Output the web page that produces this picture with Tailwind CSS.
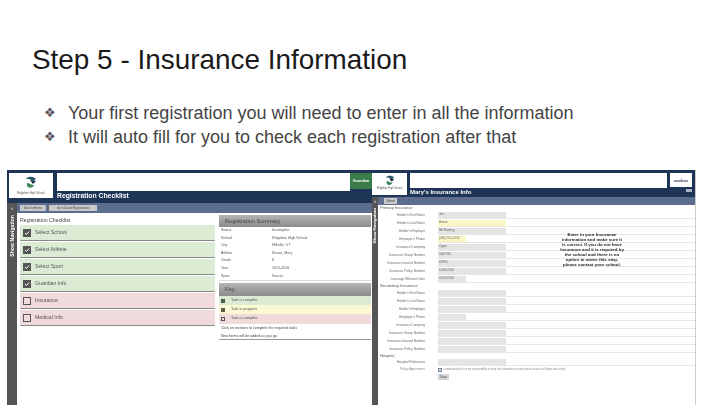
<!DOCTYPE html>
<html lang="en">
<head>
<meta charset="UTF-8">
<title>Step 5 - Insurance Information</title>
<script src="https://cdn.jsdelivr.net/npm/@tailwindcss/browser@4"></script>
</head>
<body class="bg-white overflow-hidden font-['Liberation_Sans',Arial,sans-serif]">
<div class="w-[720px] h-[405px] overflow-hidden">
  <h1 class="pt-[43px] pl-[32px] text-[27.9px] leading-[34px] text-[#1a1a1a]">Step 5 - Insurance Information</h1>
  <ul class="mt-[24px] pl-[44px] text-[18px] leading-[24px] text-[#444]">
    <li class="flex"><span class="w-[24px] text-[13px] text-[#555] font-['DejaVu_Sans',sans-serif]">❖</span>Your first registration you will need to enter in all the information</li>
    <li class="flex"><span class="w-[24px] text-[13px] text-[#555] font-['DejaVu_Sans',sans-serif]">❖</span>It will auto fill for you to check each registration after that</li>
  </ul>

  <div class="mt-[21px] ml-[7px] flex h-[235px] blur-[0.45px]">
    <!-- left screenshot: checklist -->
    <section class="w-[365px] flex flex-col">
      <div class="h-[33px] bg-[#1f3557] pt-[3px] pl-[2px] flex items-start">
        <div class="w-[44px] h-[25px] bg-white flex flex-col items-center pt-[3px]">
          <svg width="14" height="13" viewBox="0 0 14 13"><path d="M2 3C4 0 9 0 12 3L9 5 5 3Z" fill="#27566b"/><path d="M6 4l6 1-3 3z" fill="#1b2f3a"/><path d="M3 7c2 0 4 2 7 2-1 3-5 4-7 1z" fill="#3f8a5a"/></svg>
          <span class="text-[2.8px] leading-[4px] mt-[2px] text-[#555]">Ridgeline High School</span>
        </div>
        <div class="ml-[4px] flex-1 flex flex-col">
          <div class="flex">
            <div class="flex-1 h-[18px] bg-white"></div>
            <div class="w-[22px] h-[16px] bg-[#3a7d4a] rounded-bl-[1px] text-white text-[3.8px] font-bold leading-[16px] text-center">Guardian</div>
          </div>
          <div class="text-white text-[6.8px] font-bold leading-[12px] mt-[-1px]">Registration Checklist</div>
        </div>
      </div>
      <div class="flex-1 flex">
        <div class="w-[10px] bg-[#555] flex flex-col items-center text-white font-bold">
          <span class="text-[5px] leading-[10px]">›</span>
          <span class="mt-[2px] text-[5.2px] leading-[10px] [writing-mode:vertical-rl] rotate-180">Show Navigation</span>
        </div>
        <div class="flex-1 flex flex-col">
          <div class="h-[10px] bg-[#5c6d8e] flex items-center pl-[3px] gap-[3px] text-[2.8px] text-[#444]">
            <span class="h-[6px] w-[26px] bg-[#c9c9c9] leading-[6px] text-center">Back to Home</span>
            <span class="h-[6px] w-[48px] bg-[#c9c9c9] leading-[6px] text-center">Go to Saved Registrations</span>
          </div>
          <div class="flex">
            <div class="w-[195px] ml-[3px] mr-[4px] text-[5.2px] text-[#555]">
              <div class="h-[12px] leading-[14px] text-[#444]">Registration Checklist</div>
              <div class="h-[16px] mb-[1px] bg-[#dcecd4] border-b border-[#888] rounded-[1px] flex items-center pl-[3px] gap-[4px]"><span class="w-[8px] h-[8px] bg-[#555] flex items-center justify-center"><svg width="6" height="6" viewBox="0 0 6 6"><path d="M1 3l1.5 1.5L5 1.5" fill="none" stroke="#fff"/></svg></span>Select School</div>
              <div class="h-[16px] mb-[1px] bg-[#dcecd4] border-b border-[#888] rounded-[1px] flex items-center pl-[3px] gap-[4px]"><span class="w-[8px] h-[8px] bg-[#555] flex items-center justify-center"><svg width="6" height="6" viewBox="0 0 6 6"><path d="M1 3l1.5 1.5L5 1.5" fill="none" stroke="#fff"/></svg></span>Select Athlete</div>
              <div class="h-[16px] mb-[1px] bg-[#dcecd4] border-b border-[#888] rounded-[1px] flex items-center pl-[3px] gap-[4px]"><span class="w-[8px] h-[8px] bg-[#555] flex items-center justify-center"><svg width="6" height="6" viewBox="0 0 6 6"><path d="M1 3l1.5 1.5L5 1.5" fill="none" stroke="#fff"/></svg></span>Select Sport</div>
              <div class="h-[16px] mb-[1px] bg-[#dcecd4] border-b border-[#888] rounded-[1px] flex items-center pl-[3px] gap-[4px]"><span class="w-[8px] h-[8px] bg-[#555] flex items-center justify-center"><svg width="6" height="6" viewBox="0 0 6 6"><path d="M1 3l1.5 1.5L5 1.5" fill="none" stroke="#fff"/></svg></span>Guardian Info</div>
              <div class="h-[16px] mb-[1px] bg-[#f0dadb] border-b border-[#888] rounded-[1px] flex items-center pl-[3px] gap-[4px]"><span class="w-[8px] h-[8px] border border-[#555]"></span>Insurance</div>
              <div class="h-[16px] mb-[1px] bg-[#f0dadb] border-b border-[#888] rounded-[1px] flex items-center pl-[3px] gap-[4px]"><span class="w-[8px] h-[8px] border border-[#555]"></span>Medical Info</div>
            </div>
            <div class="w-[152px] pt-[2px] text-[3.6px] text-[#555]">
              <div class="h-[12px] bg-linear-to-b from-[#b4b4b4] to-[#8c8c8c] text-[5.6px] leading-[12px] pl-[6px] text-[#444]">Registration Summary</div>
              <div class="grid grid-cols-[51px_1fr] pl-[2px] auto-rows-[7.6px] leading-[7.6px] border-b border-[#ddd]">
                <span>Status</span><span>Incomplete</span>
                <span>School</span><span>Ridgeline High School</span>
                <span>City</span><span>Millville, UT</span>
                <span>Athlete</span><span>Keese, Mary</span>
                <span>Grade</span><span>8</span>
                <span>Year</span><span>2015-2016</span>
                <span>Sport</span><span>Soccer</span>
              </div>
              <div class="mt-[2px] h-[13px] bg-linear-to-b from-[#b4b4b4] to-[#8c8c8c] text-[5.6px] leading-[13px] pl-[6px] text-[#444]">Key</div>
              <div class="h-[9px] bg-[#dcecd4] flex items-center pl-[2px] gap-[6px]"><span class="w-[4px] h-[4px] bg-[#4d5d48]"></span>Task is complete</div>
              <div class="h-[9px] bg-[#fbf8d2] flex items-center pl-[2px] gap-[6px]"><span class="w-[4px] h-[4px] bg-[#5a5a48]"></span>Task in progress</div>
              <div class="h-[10px] bg-[#f0dadb] flex items-center pl-[2px] gap-[6px]"><span class="w-[4px] h-[4px] border-[0.5px] border-[#555]"></span>Task is complete</div>
              <div class="pl-[2px] h-[16px] leading-[8px] border-b border-[#999] text-[#444]">
                <p>Click on sections to complete the required tasks</p>
                <p>New forms will be added as you go</p>
              </div>
            </div>
          </div>
        </div>
      </div>
    </section>

    <!-- right screenshot: insurance form -->
    <section class="relative w-[324px] flex flex-col border-r border-[#ccc]">
      <div class="h-[27px] bg-[#1f3557] pt-[3px] flex items-start">
        <div class="w-[35px] h-[22px] bg-white flex flex-col items-center pt-[2px]">
          <svg width="12" height="11" viewBox="0 0 14 13"><path d="M2 3C4 0 9 0 12 3L9 5 5 3Z" fill="#27566b"/><path d="M6 4l6 1-3 3z" fill="#1b2f3a"/><path d="M3 7c2 0 4 2 7 2-1 3-5 4-7 1z" fill="#3f8a5a"/></svg>
          <span class="text-[2.6px] leading-[4px] mt-[1px] text-[#555]">Ridgeline High School</span>
        </div>
        <div class="ml-[3px] flex-1 flex flex-col">
          <div class="h-[15px] bg-white"></div>
          <div class="text-white text-[6px] font-bold leading-[9px]">Mary's Insurance Info</div>
        </div>
        <div class="ml-[3px] mr-[3px] flex flex-col items-end">
          <div class="w-[22px] h-[14px] bg-white flex flex-col items-center justify-center">
            <span class="w-[1px] h-[2px] bg-[#aab]"></span>
            <span class="w-[14px] h-[1.5px] bg-[#99a]"></span>
          </div>
          <span class="mt-[2px] w-[6px] h-[3px] bg-[#a9b2c2]"></span>
        </div>
      </div>
      <div class="flex-1 flex">
        <div class="w-[6px] bg-[#555] flex flex-col items-center text-white font-bold">
          <span class="text-[5px] leading-[9px]">›</span>
          <span class="mt-[2px] text-[4.4px] leading-[6px] [writing-mode:vertical-rl] rotate-180">Show Navigation</span>
        </div>
        <div class="flex-1 flex flex-col text-[3.2px] text-[#666]">
          <div class="h-[8px] bg-[#5c6d8e] flex items-center pl-[6px] text-[2.8px] text-[#444]">
            <span class="h-[6px] w-[13px] bg-[#c9c9c9] leading-[6px] text-center">Submit</span>
          </div>
          <div class="h-[6px] pl-[2px] text-[4px] leading-[6px] text-[#555]">Primary Insurance</div>

          <div class="grid grid-cols-[47px_1fr] gap-x-[13px] auto-rows-[8px]">
            <label class="text-right leading-[8px]">Holder's First Name</label>
            <div class="border-b border-[#e6e6e6] pt-[1px]"><div class="w-[68px] h-[5.5px] bg-[#e4e4e4] text-[3px] leading-[5.5px] pl-[1px]">Jon</div></div>
            <label class="text-right leading-[8px]">Holder's Last Name</label>
            <div class="border-b border-[#e6e6e6] pt-[1px]"><div class="w-[68px] h-[5.5px] bg-[#fbf8c8] text-[3px] leading-[5.5px] pl-[1px]">Reese</div></div>
            <label class="text-right leading-[8px]">Holder's Employer</label>
            <div class="border-b border-[#e6e6e6] pt-[1px]"><div class="w-[68px] h-[5.5px] bg-[#e4e4e4] text-[3px] leading-[5.5px] pl-[1px]">NE Roofing</div></div>
            <label class="text-right leading-[8px]">Employer's Phone</label>
            <div class="border-b border-[#e6e6e6] pt-[1px]"><div class="w-[28px] h-[5.5px] bg-[#fbf8c8] text-[3px] leading-[5.5px] pl-[1px]">(435) 555-5555</div></div>
            <label class="text-right leading-[8px]">Insurance Company</label>
            <div class="border-b border-[#e6e6e6] pt-[1px]"><div class="w-[68px] h-[5.5px] bg-[#e4e4e4] text-[3px] leading-[5.5px] pl-[1px]">Cigna</div></div>
            <label class="text-right leading-[8px]">Insurance Group Number</label>
            <div class="border-b border-[#e6e6e6] pt-[1px]"><div class="w-[68px] h-[5.5px] bg-[#e4e4e4] text-[3px] leading-[5.5px] pl-[1px]">5647535</div></div>
            <label class="text-right leading-[8px]">Insurance Insured Number</label>
            <div class="border-b border-[#e6e6e6] pt-[1px]"><div class="w-[68px] h-[5.5px] bg-[#e4e4e4] text-[3px] leading-[5.5px] pl-[1px]">67890</div></div>
            <label class="text-right leading-[8px]">Insurance Policy Number</label>
            <div class="border-b border-[#e6e6e6] pt-[1px]"><div class="w-[68px] h-[5.5px] bg-[#e4e4e4] text-[3px] leading-[5.5px] pl-[1px]">10/01/2016</div></div>
            <label class="text-right leading-[8px]">Coverage Effective Date</label>
            <div class="border-b border-[#e6e6e6] pt-[1px]"><div class="w-[28px] h-[5.5px] bg-[#e4e4e4] text-[3px] leading-[5.5px] pl-[1px]">01/01/2016</div></div>
          </div>

          <div class="h-[6px] pl-[2px] text-[4px] leading-[6px] text-[#555]">Secondary Insurance</div>

          <div class="grid grid-cols-[47px_1fr] gap-x-[13px] auto-rows-[8px]">
            <label class="text-right leading-[8px]">Holder's First Name</label>
            <div class="border-b border-[#e6e6e6] pt-[1px]"><div class="w-[68px] h-[5.5px] bg-[#e4e4e4]"></div></div>
            <label class="text-right leading-[8px]">Holder's Last Name</label>
            <div class="border-b border-[#e6e6e6] pt-[1px]"><div class="w-[68px] h-[5.5px] bg-[#e4e4e4]"></div></div>
            <label class="text-right leading-[8px]">Holder's Employer</label>
            <div class="border-b border-[#e6e6e6] pt-[1px]"><div class="w-[68px] h-[5.5px] bg-[#e4e4e4]"></div></div>
            <label class="text-right leading-[8px]">Employer's Phone</label>
            <div class="border-b border-[#e6e6e6] pt-[1px]"><div class="w-[28px] h-[5.5px] bg-[#e4e4e4]"></div></div>
            <label class="text-right leading-[8px]">Insurance Company</label>
            <div class="border-b border-[#e6e6e6] pt-[1px]"><div class="w-[68px] h-[5.5px] bg-[#e4e4e4]"></div></div>
            <label class="text-right leading-[8px]">Insurance Group Number</label>
            <div class="border-b border-[#e6e6e6] pt-[1px]"><div class="w-[68px] h-[5.5px] bg-[#e4e4e4]"></div></div>
            <label class="text-right leading-[8px]">Insurance Insured Number</label>
            <div class="border-b border-[#e6e6e6] pt-[1px]"><div class="w-[68px] h-[5.5px] bg-[#e4e4e4]"></div></div>
            <label class="text-right leading-[8px]">Insurance Policy Number</label>
            <div class="border-b border-[#e6e6e6] pt-[1px]"><div class="w-[68px] h-[5.5px] bg-[#e4e4e4]"></div></div>
          </div>

          <div class="h-[6px] pl-[2px] text-[4px] leading-[6px] text-[#555]">Hospital</div>

          <div class="grid grid-cols-[47px_1fr] gap-x-[13px] auto-rows-[7px]">
            <label class="text-right leading-[7px]">Hospital Preference</label>
            <div class="border-b border-[#e6e6e6]"><div class="w-[68px] h-[5.5px] bg-[#e4e4e4]"></div></div>
            <label class="text-right leading-[7px] text-[#888]">Policy Agreement</label>
            <div class="flex items-center gap-[1px] text-[2.6px] text-[#888] whitespace-nowrap"><span class="w-[4px] h-[4px] bg-[#cfe0ea] border-[0.5px] border-[#789]"></span>I understand that it is my responsibility to keep this information current and accurate at all times and certify.</div>
          </div>
          <div class="ml-[60px] mt-[1px] w-[11px] h-[6px] bg-[#d4d4d4] text-[2.8px] leading-[6px] text-center text-[#444]">Save</div>
        </div>
      </div>

      <!-- note pasted over the form -->
      <p class="absolute left-[188px] top-[62px] w-[64px] text-center text-[4.4px] leading-[5px] font-bold text-[#222]">Enter in your Insurance information and make sure it is correct. If you do not have Insurance and it is required by the school and there is no option to waive this step, please contact your school.</p>
    </section>
  </div>
</div>
</body>
</html>
